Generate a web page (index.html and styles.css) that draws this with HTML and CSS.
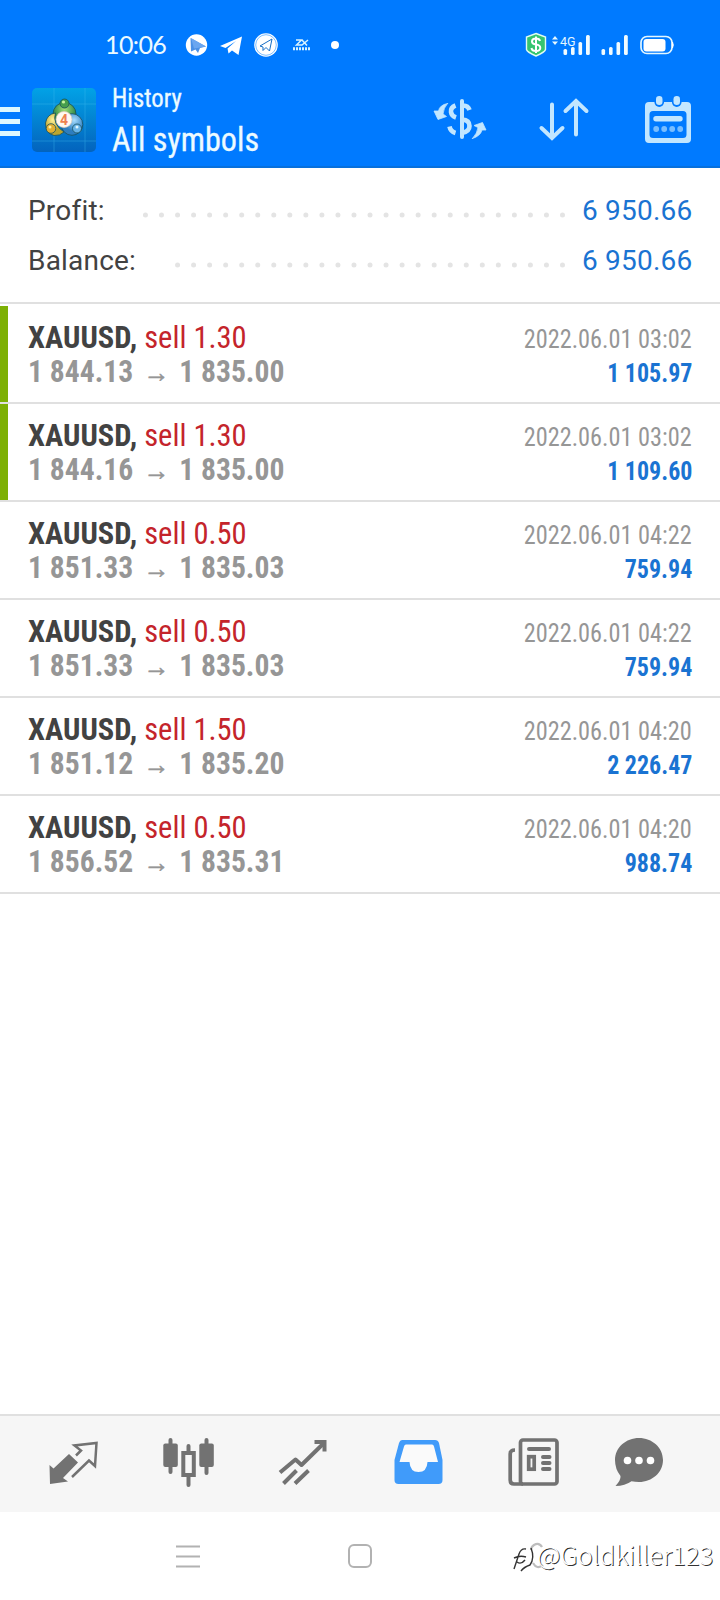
FILE: index.html
```
<!DOCTYPE html>
<html lang="en">
<head>
<meta charset="utf-8">
<title>History</title>
<link rel="stylesheet" href="styles.css">
</head>
<body>
<header class="top">
  <div class="status">
    <span class="clock">10:06</span>
    <svg class="notes" width="160" height="30" viewBox="182 30 160 30">
      <circle cx="196.500" cy="45" r="10.700" fill="#fff"/>
      <path d="M190.500 38 206 46.500 200 48 198 53 195.500 49.500 191 51.500Z" fill="#4a90e6"/>
      <path d="M191 38 206 46.500 194 48.500Z" fill="#6aa6f0"/>
      <path d="M220 46 242 36.500 238.500 55 232 50.500 228.500 53.500 227.500 48.500 236 41 225.500 48Z" fill="#fff"/>
      <circle cx="266" cy="45" r="11.800" fill="#fff"/>
      <circle cx="266" cy="45" r="10.300" fill="none" stroke="#5eafff" stroke-width=".8"/>
      <path d="M260 46 272 39 269.500 51 266 47.500 263 50.500 263 47Z" fill="none" stroke="#176fc6"/>
      <g stroke="#d9f3ff" fill="none"><path d="M296 40H301.500L296.500 45H302L308 40M302 40 307 45.500" stroke-width="1.500"/><path d="M293 48.800H310" stroke-width="3" stroke-dasharray="2 1"/></g>
      <circle cx="335" cy="45" r="4" fill="#fff"/>
    </svg>
    <svg class="signals" width="150" height="30" viewBox="525 30 150 30">
      <path d="M536 33.500 545.500 37V49.500Q545 52 536 56Q527 52 526.500 49.500V37Z" fill="#35c46f" stroke="#dffbf2" stroke-width="1.400"/>
      <path d="M540 41Q539.500 38.500 536 38.500Q532 38.500 532 41.500Q532 44 536 44.500Q540.300 45 540.300 48Q540 51 536 51Q532 51 531.500 48M536 36.500V53" fill="none" stroke="#fff" stroke-width="2"/>
      <path d="M552 39.500 555 36 558 39.500ZM552 41.500 555 45 558 41.500Z" fill="#e4f7ff"/>
      <text class="net" x="560" y="46">4G</text>
      <g fill="#f1fbff"><rect x="563.500" y="49" width="3.600" height="6" rx="1.500"/><rect x="571" y="47" width="3.600" height="8" rx="1.500"/><rect x="578.500" y="42" width="3.600" height="13" rx="1.500"/><rect x="586" y="35" width="3.800" height="20" rx="1.500"/>
      <rect x="601.500" y="49" width="3.600" height="6" rx="1.500"/><rect x="609" y="47" width="3.600" height="8" rx="1.500"/><rect x="616.500" y="42" width="3.600" height="13" rx="1.500"/><rect x="624" y="35" width="3.800" height="20" rx="1.500"/></g>
      <rect x="641" y="36.500" width="31" height="17" rx="6" fill="none" stroke="#e4f7ff" stroke-width="1.700"/><rect x="643.500" y="39" width="22" height="12.500" rx="3" fill="#fff"/><path d="M672.500 42Q674 45 672.500 48Z" fill="#fff" stroke="#fff"/>
    </svg>
  </div>
  <div class="appbar">
    <svg class="menu" width="20" height="30" viewBox="0 0 20 30"><path d="M0 2.500H20M0 14.500H20M0 26.500H20" stroke="#dcf7ff" stroke-width="5"/></svg>
    <svg class="logo" width="64" height="64" viewBox="32 88 64 64">
      <defs>
        <linearGradient id="sky" x2="0" y2="1"><stop stop-color="#02a2e6"/><stop offset="1" stop-color="#0363bd"/></linearGradient>
        <radialGradient id="leaf" cx=".5" cy=".3"><stop stop-color="#a3de75"/><stop offset="1" stop-color="#30894b"/></radialGradient>
        <radialGradient id="sun" cx=".4" cy=".3"><stop stop-color="#fff297"/><stop offset="1" stop-color="#bca52e"/></radialGradient>
        <radialGradient id="sea" cx=".6" cy=".3"><stop stop-color="#a7ddff"/><stop offset="1" stop-color="#2d7dc0"/></radialGradient>
      </defs>
      <rect x="32" y="88" width="64" height="64" rx="5" fill="url(#sky)"/>
      <path d="M54 88V152M85 88V152M32 141H96M32 104H96" stroke="#45bff0" stroke-width=".7" opacity=".5"/>
      <g stroke="#174f5d" stroke-width=".8">
        <circle cx="64.500" cy="114" r="11.500" fill="url(#leaf)"/>
        <circle cx="72" cy="124.500" r="10.800" fill="url(#sea)"/>
        <path d="M64 132Q60 136 54 135.500Q45 133 45.500 123Q47 114 55.500 113Q52 124 64 132Z" fill="url(#sun)"/>
        <circle cx="64.500" cy="103.500" r="4.500" fill="#469e4c"/>
        <circle cx="51" cy="128.500" r="4.800" fill="#e2b034"/>
        <circle cx="77" cy="128.500" r="4.500" fill="#69b4e8"/>
      </g>
      <circle cx="64" cy="119.500" r="8" fill="#fff8f2" stroke="#dccab9" stroke-width=".7"/>
      <text class="four" x="60" y="124.500">4</text>
      <circle cx="63.500" cy="102" r="1.600" fill="#c8f3a1"/><circle cx="50" cy="127" r="1.500" fill="#fff0a0"/><circle cx="77" cy="127" r="1.500" fill="#dff5ff"/>
    </svg>
    <div class="titles"><div class="sub">History</div><div class="title">All symbols</div></div>
    <svg class="actions" width="260" height="52" viewBox="432 94 260 52" fill="none" stroke="#c2e6ff" stroke-linecap="round">
      <path d="M462 101V137" stroke-width="4"/>
      <path d="M455.500 105.500Q450.500 107.500 451 112Q451.500 116 456 117.500M462 105.500Q468 105 469.500 110M462 119.500Q469.500 120 469.500 126Q469.500 131.500 462 133M449.500 126.500Q450.500 131.500 455.500 133" stroke-width="4.600" stroke-linecap="butt"/>
      <path d="M447.500 103.500Q439.500 105 438.500 111L434 111 438 119.500 446.500 116.500 443 114Q443.500 108 447.500 103.500ZM472.500 138.500Q480.500 136 482 130L486 130 482.500 122.500 474 125.500 478 127.500Q477.500 133 472.500 138.500Z" fill="#c2e6ff" stroke-width=".8" stroke-linejoin="round"/>
      <path d="M552 104.500V138M541.500 128 552 138 562.500 128M576 134.500V101M565.500 111 576 101 586.500 111" stroke-width="4"/>
      <path d="M649 102H687Q691 102 691 106V139Q691 143 687 143H649Q645 143 645 139V106Q645 102 649 102ZM653 111Q649.500 111 649.500 114.500V134.500Q649.500 138 653 138H683Q686.500 138 686.500 134.500V114.500Q686.500 111 683 111Z" fill="#c2e6ff" fill-rule="evenodd" stroke="none"/>
      <rect x="654.500" y="94.500" width="9.500" height="12.500" rx="4.700" fill="#007aff" stroke="none"/><rect x="672" y="94.500" width="9.500" height="12.500" rx="4.700" fill="#007aff" stroke="none"/>
      <rect x="656" y="96" width="6.500" height="9" rx="3.200" fill="#c2e6ff" stroke="none"/><rect x="673.500" y="96" width="6.500" height="9" rx="3.200" fill="#c2e6ff" stroke="none"/>
      <path d="M656 118.700H680" stroke-width="5.400"/>
      <path d="M656.200 129H681" stroke="#78bdff" stroke-width="5.800" stroke-dasharray="0 8"/>
    </svg>
  </div>
</header>
<section class="summary">
  <div class="line"><span class="label">Profit:</span><svg class="dots" width="424" height="6" viewBox="0 0 424 6"><path d="M421.500 3H0" stroke="#e4e4e4" stroke-width="5" stroke-linecap="round" stroke-dasharray="0 16.040"/></svg><span class="amount">6 950.66</span></div>
  <div class="line"><span class="label">Balance:</span><svg class="dots" width="392" height="6" viewBox="0 0 392 6"><path d="M389.500 3H0" stroke="#e4e4e4" stroke-width="5" stroke-linecap="round" stroke-dasharray="0 16.040"/></svg><span class="amount">6 950.66</span></div>
</section>
<main class="deals">
  <article class="deal marked first"><div><div class="name"><b>XAUUSD,</b> <span>sell 1.30</span></div><div class="prices">1 844.13 <i>→</i> 1 835.00</div></div><div class="right"><time>2022.06.01 03:02</time><strong>1 105.97</strong></div></article>
  <article class="deal marked"><div><div class="name"><b>XAUUSD,</b> <span>sell 1.30</span></div><div class="prices">1 844.16 <i>→</i> 1 835.00</div></div><div class="right"><time>2022.06.01 03:02</time><strong>1 109.60</strong></div></article>
  <article class="deal"><div><div class="name"><b>XAUUSD,</b> <span>sell 0.50</span></div><div class="prices">1 851.33 <i>→</i> 1 835.03</div></div><div class="right"><time>2022.06.01 04:22</time><strong>759.94</strong></div></article>
  <article class="deal"><div><div class="name"><b>XAUUSD,</b> <span>sell 0.50</span></div><div class="prices">1 851.33 <i>→</i> 1 835.03</div></div><div class="right"><time>2022.06.01 04:22</time><strong>759.94</strong></div></article>
  <article class="deal"><div><div class="name"><b>XAUUSD,</b> <span>sell 1.50</span></div><div class="prices">1 851.12 <i>→</i> 1 835.20</div></div><div class="right"><time>2022.06.01 04:20</time><strong>2 226.47</strong></div></article>
  <article class="deal"><div><div class="name"><b>XAUUSD,</b> <span>sell 0.50</span></div><div class="prices">1 856.52 <i>→</i> 1 835.31</div></div><div class="right"><time>2022.06.01 04:20</time><strong>988.74</strong></div></article>
</main>
<nav class="tabs">
  <svg width="50" height="50" viewBox="48 1437 50 50"><path d="M49.500 1465 53.500 1468.500 69 1454 78 1462.500 63 1478 68 1481.500 50 1484Z" fill="#727272"/><path d="M76 1455.500 81 1450.500 74.500 1445.500 96.500 1443 95 1466 89 1460.500 72 1477" fill="none" stroke="#727272" stroke-width="2.500"/></svg>
  <svg width="50" height="50" viewBox="163 1437 50 50" fill="#727272"><rect x="163.300" y="1443.500" width="14.500" height="23.500" rx="2"/><rect x="199.300" y="1443.500" width="14.500" height="23.500" rx="2"/><path d="M170.500 1440V1472M206.500 1440V1473M188.500 1446V1453M188.500 1475V1485" stroke="#727272" stroke-width="4" stroke-linecap="round"/><rect x="183.300" y="1453" width="10.500" height="22" fill="#f6f6f6" stroke="#727272" stroke-width="4"/></svg>
  <svg width="50" height="50" viewBox="278 1437 50 50" fill="none" stroke="#727272" stroke-width="4"><path d="M280 1472.500 295.500 1459.500 301.500 1465 324.500 1442.500M283.500 1483.500 296.500 1470.500M295 1483.500 308.500 1470.500" stroke-linejoin="round"/><path d="M314.500 1442H324.500V1451.500"/></svg>
  <svg width="50" height="50" viewBox="393 1437 50 50"><path d="M402 1440H435Q438 1440 439 1443L442.500 1460V1480Q442.500 1484 438.500 1484H398.500Q394.500 1484 394.500 1480V1460L399 1443Q400 1440 402 1440Z" fill="#409bfa"/><path d="M406 1444.500H432Q433.500 1444.500 434 1446.500L438 1462H427.500Q427 1472 418.500 1472Q410 1472 409.500 1462H399.500L404 1446.500Q404.500 1444.500 406 1444.500Z" fill="#fafafa"/></svg>
  <svg width="50" height="50" viewBox="508 1437 50 50" fill="none" stroke="#727272" stroke-width="3.700"><rect x="520.500" y="1440" width="36.500" height="44" rx="2.500"/><path d="M515 1450Q510.200 1450 510.200 1454V1480Q510.200 1484 514 1484H523"/><path d="M529 1449H549M543 1457H549.500M543 1463H549.500M543 1469H549.500" stroke-width="4" stroke-linecap="round"/><rect x="528.700" y="1456.700" width="5.500" height="12.500"/></svg>
  <svg class="chat" width="50" height="50" viewBox="614 1437 50 50"><path d="M639 1438C652 1438 663 1447.500 663 1460C663 1472.500 652 1482 639 1482Q635 1482 631.500 1481.300Q625 1486 615.500 1486Q621 1480 620.500 1476Q615 1469 615 1460C615 1447.500 626 1438 639 1438Z" fill="#727272"/><g fill="#fff"><circle cx="627.500" cy="1460.500" r="3.800"/><circle cx="639" cy="1460.500" r="3.800"/><circle cx="650.500" cy="1460.500" r="3.800"/></g></svg>
</nav>
<footer class="system">
  <svg class="recent" width="24" height="24" viewBox="0 0 24 24"><path d="M0 1.500H24M0 11.500H24M0 21.500H24" stroke="#b2b2b2" stroke-width="2"/></svg>
  <div class="home"></div>
  <svg class="back" width="26" height="32" viewBox="512 1541 26 32" fill="none"><path d="M542 1547Q539 1542 534 1545Q531 1547 531 1550M533 1563Q537 1570 543 1565" stroke="#bdbdbd" stroke-width="2.200"/><path d="M514 1569 519 1554Q521 1548 526 1549M514 1558Q520 1555 526 1557M521 1571Q524 1567 530 1565Q535 1558 531 1548M517 1562Q521 1565 525 1560" stroke="#333" stroke-width="1.400"/></svg>
  <span class="mark">@Goldkiller123</span>
</footer>
</body>
</html>
```
FILE: styles.css
```
* { box-sizing: border-box; }
body { margin: 0; width: 720px; height: 1600px; display: flex; flex-direction: column; background: #fff; font-family: "Roboto Condensed", Roboto, sans-serif; }
svg { display: block; flex: none; overflow: visible; }
.top { height: 168px; background: #007aff; border-bottom: 2px solid #0870dc; color: #ecfaff; }
.status { height: 82px; padding: 30px 45px 0 105px; display: flex; align-items: flex-start; }
.clock { width: 77px; font: 400 25px/28px Lato, sans-serif; letter-spacing: -.6px; white-space: nowrap; }
.signals { margin-left: auto; }
.net { font: 12.500px Roboto, sans-serif; fill: #e4f7ff; }
.four { font: bold 14px Roboto, sans-serif; fill: #ed8150; }
.appbar { height: 84px; display: flex; align-items: flex-start; }
.menu { margin-top: 25px; }
.logo { margin: 6px 16px 0 12px; }
.titles { width: 200px; white-space: nowrap; -webkit-text-stroke: .3px #ecfaff; }
.sub { font-size: 26px; line-height: 30px; margin-top: 1px; transform: scaleX(.95); transform-origin: 0 0; }
.title { font-size: 33px; line-height: 40px; margin-top: 7px; transform: scaleX(.975); transform-origin: 0 0; }
.actions { margin: 12px 28px 0 auto; }
.summary { height: 136px; padding: 17px 28px 0; border-bottom: 2px solid #e0e0e0; font-family: Roboto, sans-serif; }
.line { height: 50px; display: flex; align-items: center; font-size: 28px; letter-spacing: .2px; white-space: nowrap; }
.label { color: #424242; }
.dots { margin: 9px 17px 0 auto; }
.amount { color: #1a73d2; width: 110px; text-align: right; }
.deals { flex: 1; }
.deal { height: 98px; padding: 14px 28px 0; display: flex; justify-content: space-between; border-bottom: 2px solid #e0e0e0; white-space: nowrap; }
.deal.first { height: 100px; padding-top: 16px; }
.marked { background: linear-gradient(#7db005, #7db005) 0 0 / 8px 100% no-repeat; background-clip: padding-box; }
.first { background-position: 0 2px; }
.name, .prices { font-size: 32px; line-height: 34px; transform: scaleX(.953); transform-origin: 0 0; }
.name { color: #424242; }
.name span { color: #c4242b; }
.prices { font-weight: 700; color: #969696; transform: scaleX(.925); }
.prices i { font: 28px "Liberation Sans", sans-serif; line-height: 1; margin: 0 3.500px; -webkit-text-stroke: .6px #969696; }
.right { display: flex; flex-direction: column; align-items: flex-end; padding-top: 2px; }
.right time, .right strong { font-size: 26px; line-height: 34px; transform: scaleX(.935); transform-origin: 100% 0; }
.right time { color: #969696; }
.right strong { color: #1a73d2; transform: scaleX(.922); }
.tabs { height: 98px; border-top: 2px solid #e0e0e0; background: #f6f6f6; padding: 21px 0 0 48px; display: flex; gap: 65px; }
.chat { margin-left: -9px; }
.system { height: 88px; display: flex; align-items: flex-start; padding: 29px 6px 0 176px; }
.recent { margin-top: 4px; }
.home { width: 24px; height: 24px; margin: 3px 0 0 148px; border: 2px solid #b2b2b2; border-radius: 6px; }
.back { margin-left: 140px; }
.mark { margin: -4px 0 0 -1px; color: #fff; font: 300 25.500px/34px "Noto Sans CJK SC", sans-serif; letter-spacing: .1px; text-shadow: 1px 1px 0 #333; white-space: nowrap; }
```
